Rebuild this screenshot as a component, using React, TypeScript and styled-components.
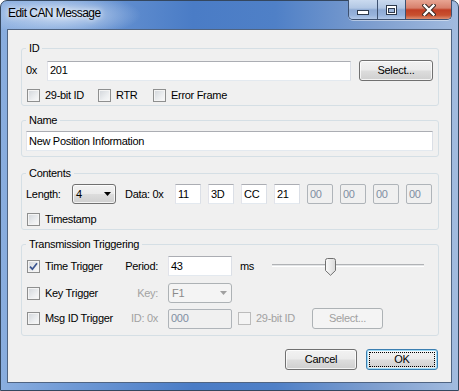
import React from 'react';
import styled, { createGlobalStyle, css } from 'styled-components';

const GlobalStyle = createGlobalStyle`
  html, body { margin: 0; padding: 0; background: #ffffff; }
  body {
    font-family: "Liberation Sans", Arial, sans-serif;
    font-size: 11px;
    letter-spacing: -0.3px;
    color: #000;
  }
  * { box-sizing: border-box; }
`;

const Window = styled.div`
  width: 459px;
  height: 391px;
  border: 1px solid #34475f;
  border-radius: 7px 7px 0 0;
  display: flex;
  flex-direction: column;
  background:
    radial-gradient(ellipse 80px 22px at 60px 14px, rgba(220, 232, 248, 0.85), rgba(220, 232, 248, 0) 100%),
    linear-gradient(90deg, #8aaedf 0%, #6f99d5 16%, #4a7cc6 42%, #4f80c7 60%, #7f9fcf 82%, #a2bbdf 100%);
`;

const TitleBar = styled.div`
  height: 28px;
  display: flex;
  align-items: flex-start;
`;

const Title = styled.div`
  padding: 5px 0 0 7px;
  font-size: 12px;
  line-height: 15px;
  letter-spacing: -0.55px;
  color: #000;
  text-shadow: 0 0 5px rgba(255, 255, 255, 0.9), 0 0 9px rgba(255, 255, 255, 0.6);
`;

const CaptionGroup = styled.div`
  margin: -1px 6px 0 auto;
  width: 104px;
  height: 20px;
  display: flex;
  border: 1px solid #3d5170;
  border-top: none;
  border-radius: 0 0 5px 5px;
  overflow: hidden;
  box-shadow: 0 1px 0 rgba(255, 255, 255, 0.45);
`;

const CaptionButton = styled.div<{ $close?: boolean; $w?: number }>`
  flex: ${p => (p.$w ? `0 0 ${p.$w}px` : '1 1 auto')};
  display: flex;
  align-items: center;
  justify-content: center;
  & + & { border-left: 1px solid #3d5170; }
  ${p =>
    p.$close
      ? css`
          background: linear-gradient(180deg, #e8a593 0%, #d7806c 42%, #c13f25 52%, #c8502f 80%, #dc8f73 100%);
        `
      : css`
          background: linear-gradient(180deg, #cadaef 0%, #b2c7e4 42%, #8eaad4 52%, #97b3dc 80%, #b3c9e8 100%);
        `}
`;

const Client = styled.div`
  margin: 0 6px;
  height: 354px;
  border: 1px solid #4f6482;
  background: #f0f0f0;
  padding: 12px 12px 0 13px;
  display: flex;
  flex-direction: column;
`;

const Group = styled.fieldset<{ $pt: number; $pb: number; $mt?: number }>`
  margin: ${p => p.$mt ?? 0}px 0 0 0;
  min-width: 0;
  border: 1px solid #d5dfe5;
  border-radius: 3px;
  padding: ${p => p.$pt}px 5px ${p => p.$pb}px 4px;
`;

const Legend = styled.legend`
  padding: 0 3px;
  margin: 0;
  line-height: 13px;
  font-size: 11px;
`;

const Row = styled.div<{ $h: number; $mt?: number }>`
  height: ${p => p.$h}px;
  margin-top: ${p => p.$mt ?? 0}px;
  display: flex;
  align-items: center;
`;

const Label = styled.div<{ $w?: number; $ml?: number; $right?: boolean; $disabled?: boolean }>`
  flex: 0 0 ${p => (p.$w ? `${p.$w}px` : 'auto')};
  margin-left: ${p => p.$ml ?? 0}px;
  text-align: ${p => (p.$right ? 'right' : 'left')};
  line-height: 13px;
  white-space: nowrap;
  color: ${p => (p.$disabled ? '#a2a2a2' : '#000')};
`;

const Field = styled.div<{ $w?: number; $ml?: number; $disabled?: boolean }>`
  flex: ${p => (p.$w ? `0 0 ${p.$w}px` : '1 1 auto')};
  margin-left: ${p => p.$ml ?? 0}px;
  height: 20px;
  display: flex;
  align-items: center;
  padding: 0 2px;
  line-height: 13px;
  white-space: nowrap;
  ${p =>
    p.$disabled
      ? css`
          background: #f0f0f0;
          border: 1px solid #afb4b9;
          border-radius: 2px;
          color: #7f8ea2;
        `
      : css`
          background: #ffffff;
          border: 1px solid;
          border-color: #abadb3 #dbdfe6 #e3e9ef #e2e3ea;
          color: #000;
        `}
`;

const DataBoxes = styled.div`
  display: flex;
  gap: 7px;
`;

const buttonFace = css`
  border: 1px solid #707070;
  border-radius: 3px;
  background: linear-gradient(180deg, #f2f2f2 0%, #ebebeb 48%, #dddddd 52%, #cfcfcf 100%);
  box-shadow: inset 0 0 0 1px rgba(255, 255, 255, 0.75);
`;

const disabledFace = css`
  border: 1px solid #adb2b5;
  border-radius: 3px;
  background: #f4f4f4;
  color: #a0a0a0;
`;

const Combo = styled.div<{ $w: number; $ml?: number; $disabled?: boolean }>`
  flex: 0 0 ${p => p.$w}px;
  margin-left: ${p => p.$ml ?? 0}px;
  height: 20px;
  display: flex;
  align-items: center;
  justify-content: space-between;
  padding: 0 4px 0 3px;
  line-height: 13px;
  ${p => (p.$disabled ? disabledFace : buttonFace)}
  ${p => p.$disabled && css`color: #8a8a8a;`}
`;

const Button = styled.div<{ $w: number; $ml?: number; $disabled?: boolean; $default?: boolean }>`
  position: relative;
  flex: 0 0 ${p => p.$w}px;
  margin-left: ${p => p.$ml ?? 0}px;
  height: 21px;
  display: flex;
  align-items: center;
  justify-content: center;
  line-height: 13px;
  ${p => (p.$disabled ? disabledFace : buttonFace)}
  ${p =>
    p.$default &&
    css`
      border-color: #3c7fb1;
      box-shadow: inset 0 0 0 1px #9fdcf8, inset 0 0 0 2px rgba(255, 255, 255, 0.5);
      &::after {
        content: '';
        position: absolute;
        inset: 2px;
        border: 1px dotted #000;
      }
    `}
`;

const CheckItem = styled.div<{ $w?: number; $ml?: number; $disabled?: boolean }>`
  flex: 0 0 ${p => (p.$w ? `${p.$w}px` : 'auto')};
  margin-left: ${p => p.$ml ?? 0}px;
  display: flex;
  align-items: center;
  gap: 5px;
  padding-left: 1px;
  white-space: nowrap;
  line-height: 13px;
  color: ${p => (p.$disabled ? '#a2a2a2' : '#000')};
`;

const Box = styled.div<{ $disabled?: boolean }>`
  flex: 0 0 13px;
  width: 13px;
  height: 13px;
  border: 1px solid ${p => (p.$disabled ? '#bcbcbc' : '#8e8f8f')};
  background: ${p =>
    p.$disabled ? '#f4f4f4' : 'linear-gradient(135deg, #d1d5da 0%, #eceef0 60%, #fafafa 100%)'};
  box-shadow: inset 0 0 0 1px #f4f4f4;
  display: flex;
  align-items: center;
  justify-content: center;
`;

const Slider = styled.div`
  position: relative;
  flex: 0 0 152px;
  height: 20px;
  display: flex;
  align-items: center;
`;

const Track = styled.div`
  width: 100%;
  height: 3px;
  margin-top: -1px;
  border-top: 1px solid #b0b2b5;
  border-bottom: 1px solid #ffffff;
  background: #e3e5e7;
`;

const Thumb = styled.svg`
  position: absolute;
  top: 2px;
`;

const Footer = styled.div`
  margin-top: 13px;
  padding-right: 1px;
  display: flex;
  justify-content: flex-end;
  gap: 9px;
`;

const Check = ({ label, checked, disabled, w, ml }: { label: string; checked?: boolean; disabled?: boolean; w?: number; ml?: number }) => (
  <CheckItem $w={w} $ml={ml} $disabled={disabled}>
    <Box $disabled={disabled}>
      {checked && (
        <svg width="9" height="9" viewBox="0 0 9 9">
          <path d="M1 4.6 L3.4 7.2 L8 1.2" fill="none" stroke="#3b5590" strokeWidth="1.7" />
        </svg>
      )}
    </Box>
    <span>{label}</span>
  </CheckItem>
);

const Arrow = ({ color }: { color: string }) => (
  <svg width="7" height="4" viewBox="0 0 7 4">
    <path d="M0 0 H7 L3.5 4 Z" fill={color} />
  </svg>
);

const dataBytes = ['11', '3D', 'CC', '21', '00', '00', '00', '00'];
const dataLength = 4;
const period = 43;
const periodMax = 114;
const sliderWidth = 152;
const thumbWidth = 11;

export default function App() {
  const thumbLeft = Math.round((period / periodMax) * (sliderWidth - thumbWidth));

  return (
    <>
      <GlobalStyle />
      <Window>
        <TitleBar>
          <Title>Edit CAN Message</Title>
          <CaptionGroup>
            <CaptionButton $w={28}>
              <svg width="12" height="6" viewBox="0 0 12 6" style={{ marginTop: 7 }}>
                <rect x="0.5" y="0.5" width="11" height="4" fill="#fff" stroke="#2e3a4c" />
              </svg>
            </CaptionButton>
            <CaptionButton $w={28}>
              <svg width="11" height="10" viewBox="0 0 11 10" style={{ marginTop: 1 }}>
                <rect x="0.5" y="0.5" width="10" height="9" fill="#fff" stroke="#2e3a4c" />
                <rect x="2.5" y="3.5" width="6" height="4" fill="#9fb7db" stroke="#2e3a4c" />
              </svg>
            </CaptionButton>
            <CaptionButton $close>
              <svg width="14" height="12" viewBox="0 0 14 12" style={{ marginTop: 1 }}>
                <path d="M2.5 1.5 L11.5 10.5 M11.5 1.5 L2.5 10.5" stroke="#3a2a26" strokeWidth="4.4" strokeLinecap="square" />
                <path d="M2.5 1.5 L11.5 10.5 M11.5 1.5 L2.5 10.5" stroke="#ffffff" strokeWidth="2.4" strokeLinecap="square" />
              </svg>
            </CaptionButton>
          </CaptionGroup>
        </TitleBar>

        <Client>
          <Group $pt={5} $pb={2}>
            <Legend>ID</Legend>
            <Row $h={21}>
              <Label $w={21}>0x</Label>
              <Field>201</Field>
              <Button $w={74} $ml={8}>Select...</Button>
            </Row>
            <Row $h={15} $mt={7}>
              <Check w={71} label="29-bit ID" />
              <Check w={55} label="RTR" />
              <Check label="Error Frame" />
            </Row>
          </Group>

          <Group $pt={4} $pb={5} $mt={8}>
            <Legend>Name</Legend>
            <Row $h={20}>
              <Field>New Position Information</Field>
            </Row>
          </Group>

          <Group $pt={4} $pb={2} $mt={10}>
            <Legend>Contents</Legend>
            <Row $h={20}>
              <Label $w={46}>Length:</Label>
              <Combo $w={44}>
                <span>{dataLength}</span>
                <Arrow color="#000" />
              </Combo>
              <Label $w={50} $ml={9}>Data: 0x</Label>
              <DataBoxes>
                {dataBytes.map((b, i) => (
                  <Field key={i} $w={26} $disabled={i >= dataLength}>
                    {b}
                  </Field>
                ))}
              </DataBoxes>
            </Row>
            <Row $h={15} $mt={8}>
              <Check label="Timestamp" />
            </Row>
          </Group>

          <Group $pt={5} $pb={6} $mt={8}>
            <Legend>Transmission Triggering</Legend>
            <Row $h={20}>
              <Check w={96} label="Time Trigger" checked />
              <Label $w={36} $right>Period:</Label>
              <Field $w={64} $ml={10}>{period}</Field>
              <Label $w={32} $ml={8}>ms</Label>
              <Slider>
                <Track />
                <Thumb width="11" height="18" viewBox="0 0 11 18" style={{ left: thumbLeft }}>
                  <defs>
                    <linearGradient id="thumbFill" x1="0" y1="0" x2="1" y2="0">
                      <stop offset="0" stopColor="#fbfbfb" />
                      <stop offset="1" stopColor="#d9d9d9" />
                    </linearGradient>
                  </defs>
                  <path
                    d="M0.5 2.5 Q0.5 0.5 2.5 0.5 H8.5 Q10.5 0.5 10.5 2.5 V12.5 L5.5 17.3 L0.5 12.5 Z"
                    fill="url(#thumbFill)"
                    stroke="#707070"
                  />
                </Thumb>
              </Slider>
            </Row>
            <Row $h={20} $mt={7}>
              <Check w={96} label="Key Trigger" />
              <Label $w={36} $right $disabled>Key:</Label>
              <Combo $w={64} $ml={10} $disabled>
                <span>F1</span>
                <Arrow color="#a0a0a0" />
              </Combo>
            </Row>
            <Row $h={21} $mt={5}>
              <Check w={96} label="Msg ID Trigger" />
              <Label $w={36} $right $disabled>ID: 0x</Label>
              <Field $w={64} $ml={10} $disabled>000</Field>
              <Check w={75} ml={5} label="29-bit ID" disabled />
              <Button $w={71} $disabled>Select...</Button>
            </Row>
          </Group>

          <Footer>
            <Button $w={72}>Cancel</Button>
            <Button $w={72} $default>OK</Button>
          </Footer>
        </Client>
      </Window>
    </>
  );
}
